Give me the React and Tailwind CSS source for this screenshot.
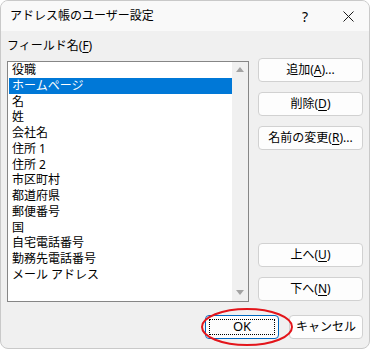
import { useState } from 'react'

const fields = [
  '役職',
  'ホームページ',
  '名',
  '姓',
  '会社名',
  '住所 1',
  '住所 2',
  '市区町村',
  '都道府県',
  '郵便番号',
  '国',
  '自宅電話番号',
  '勤務先電話番号',
  'メール アドレス',
]

function Btn({ children, className = '' }) {
  return (
    <button className={`h-[24px] w-full rounded-[4px] border border-[#d1d1d1] bg-[#fdfdfd] text-[12px] leading-none text-black flex items-center justify-center ${className}`}>
      {children}
    </button>
  )
}

function App() {
  const [selected, setSelected] = useState(1)
  return (
    <div className="w-[371px] h-[350px] bg-white font-['Noto_Sans','Noto_Sans_CJK_JP',sans-serif] text-black">
      <div className="relative w-[370px] h-[349px] rounded-[8px] border border-[#c9c9c9] bg-[#f0f0f0] overflow-hidden flex flex-col">
        {/* title bar */}
        <div className="h-[30px] bg-[#f9f9f9] flex items-center pl-[9px] text-[12px] shrink-0">
          <span>アドレス帳のユーザー設定</span>
          <span className="ml-auto mr-[35px] text-[14px]">?</span>
          <svg width="11" height="11" viewBox="0 0 11 11" className="mr-[15px]">
            <path d="M0.5 0.5 L10.5 10.5 M10.5 0.5 L0.5 10.5" stroke="#1b1b1b" strokeWidth="1" />
          </svg>
        </div>

        <div className="flex pl-[6px] pr-[6px] h-[271px] shrink-0">
          {/* left column */}
          <div className="w-[242px] flex flex-col pt-[7px]">
            <div className="text-[12px] leading-[16px] h-[16px]">
              フィールド名(<span className="underline underline-offset-2">F</span>)
            </div>
            <div className="mt-[7px] h-[242px] border border-[#868686] bg-white flex">
              <div className="flex-1 pl-[1px]">
                {fields.map((f, i) => (
                  <div
                    key={f}
                    onClick={() => setSelected(i)}
                    className={`h-[15.75px] leading-[15.75px] text-[12px] pl-[3px] whitespace-nowrap ${i === selected ? 'bg-[#0078d7] text-white' : ''}`}
                  >
                    {f}
                  </div>
                ))}
              </div>
              <div className="w-[16px] bg-[#f0f0f0] flex flex-col items-center justify-between pt-[5px] pb-[6px]">
                <svg width="8" height="5" viewBox="0 0 8 5"><path d="M0 5 L4 0 L8 5 Z" fill="#a3a3a3" /></svg>
                <svg width="8" height="5" viewBox="0 0 8 5"><path d="M0 0 L4 5 L8 0 Z" fill="#a3a3a3" /></svg>
              </div>
            </div>
          </div>

          {/* right column */}
          <div className="ml-[9px] w-[105px] flex flex-col pt-[27px] pb-[1px]">
            <div className="flex flex-col gap-[10px]">
              <Btn>追加(<span className="underline underline-offset-2">A</span>)...</Btn>
              <Btn>削除(<span className="underline underline-offset-2">D</span>)</Btn>
              <Btn>名前の変更(<span className="underline underline-offset-2">R</span>)...</Btn>
            </div>
            <div className="mt-auto flex flex-col gap-[10px]">
              <Btn>上へ(<span className="underline underline-offset-2">U</span>)</Btn>
              <Btn>下へ(<span className="underline underline-offset-2">N</span>)</Btn>
            </div>
          </div>
        </div>

        {/* bottom buttons */}
        <div className="flex justify-end gap-[10px] pr-[6px] mt-[13px]">
          <button className="relative h-[24px] w-[74px] rounded-[4px] border border-[#0067c0] bg-[#fdfdfd] text-[13px] flex items-center justify-center">
            <span className="absolute inset-[3px] border border-dotted border-black" />
            OK
          </button>
          <div className="w-[74px]">
            <Btn>キャンセル</Btn>
          </div>
        </div>

        {/* red annotation ellipse */}
        <svg className="absolute left-[199px] top-[306px] pointer-events-none" width="94" height="40" viewBox="0 0 94 40">
          <ellipse cx="47" cy="20" rx="45" ry="18" fill="none" stroke="#e3151b" strokeWidth="2" />
        </svg>
      </div>
    </div>
  )
}

export default App
